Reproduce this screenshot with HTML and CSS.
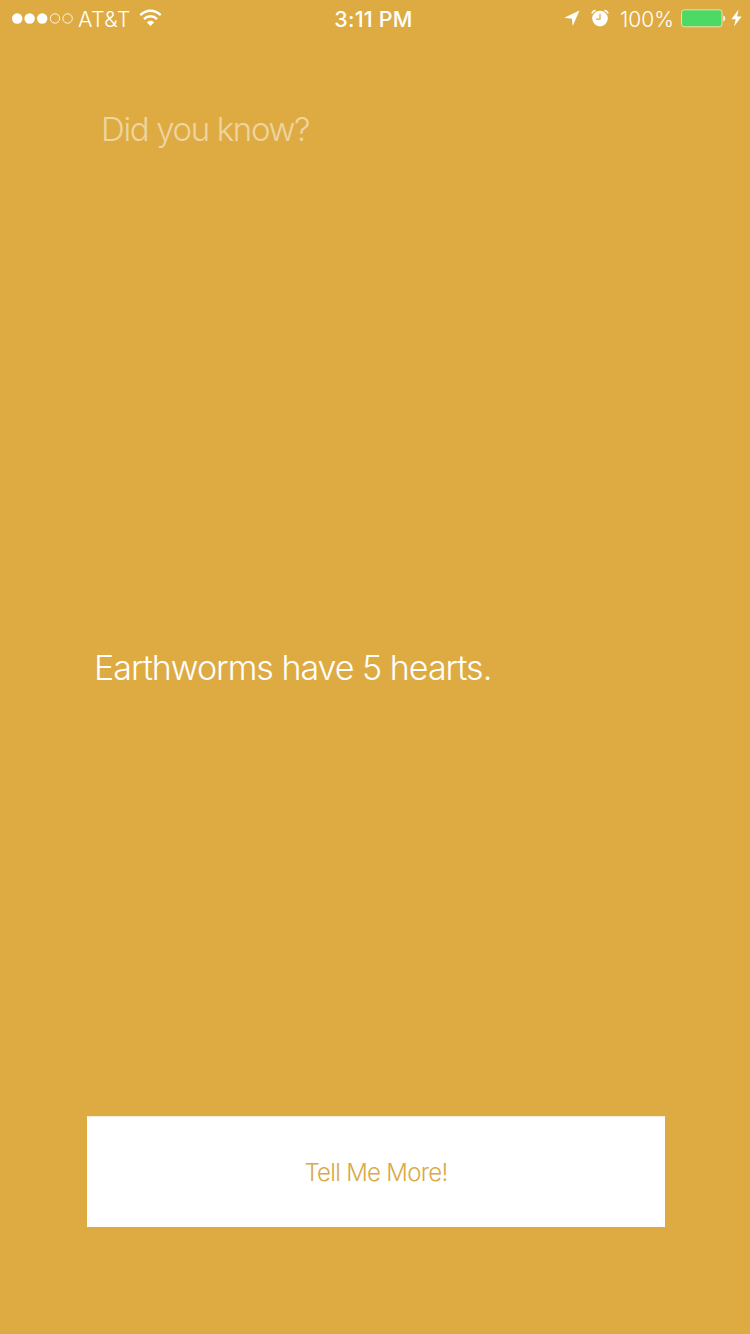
FILE: index.html
```html
<!DOCTYPE html>
<html lang="en">
<head>
<meta charset="utf-8">
<title>Did you know?</title>
<link rel="stylesheet" href="styles.css">
</head>
<body>
<div class="screen">
  <header class="status">
    <div class="status-left">
      <svg class="signal" width="62" height="12" viewBox="0 0 62 12">
        <g fill="#fff"><circle cx="5.2" cy="5.5" r="5.2"/><circle cx="17.6" cy="5.5" r="5.2"/><circle cx="30.2" cy="5.5" r="5.2"/></g>
        <g fill="none" stroke="#fff" stroke-opacity=".85"><circle cx="43" cy="5.5" r="4.7"/><circle cx="55.6" cy="5.5" r="4.7"/></g>
      </svg>
      <span class="carrier">AT&amp;T</span>
      <svg class="wifi" width="24" height="18" viewBox="0 0 24 18">
        <g fill="none" stroke="#fff" stroke-width="2.5"><path d="M1.3 6.2C7.4 .4 15.6 .4 21.7 6.2"/><path d="M5 10.1C8.7 6.4 14.3 6.4 18 10.1"/></g>
        <path fill="#fff" d="M7.7 13.2C9.9 11.1 13.1 11.1 15.3 13.2L11.5 17Z"/>
      </svg>
    </div>
    <span class="time">3:11 PM</span>
    <div class="status-right">
      <svg class="location" width="17" height="17" viewBox="0 0 17 17"><path fill="#fff" d="M16.5 .5L9.7 16L8.9 8.7L1.2 7.8Z"/></svg>
      <svg class="alarm" width="18" height="18" viewBox="0 0 18 18">
        <circle cx="9" cy="9.6" r="7.8" fill="#fff"/>
        <path d="M.9 4.4Q1.7 1.8 4.5 1.3M17.1 4.4Q16.3 1.8 13.5 1.3" fill="none" stroke="#fff" stroke-width="1.7"/>
        <path d="M9 4.7V10.1H5" fill="none" stroke="#deab42" stroke-width="1.3"/>
      </svg>
      <span class="percent">100%</span>
      <svg class="battery" width="45" height="19" viewBox="0 0 45 19">
        <rect x=".6" y=".8" width="40.4" height="17" rx="2.7" fill="#4cd964" stroke="#f3deac" stroke-width="1"/>
        <path fill="#fff" d="M42.3 6.5Q44.2 7.2 44.2 9.5T42.3 12.5Z"/>
      </svg>
      <svg class="bolt" width="11" height="18" viewBox="0 0 11 18"><path fill="#fff" d="M7.6 .4L.3 10.3H4.7L3 17.6L10.6 7.5H6.1Z"/></svg>
    </div>
  </header>
  <main class="content">
    <h1 class="title">Did you know?</h1>
    <p class="fact">Earthworms have 5 hearts.</p>
    <button class="more" type="button"><span class="more-label">Tell Me More!</span></button>
  </main>
</div>
</body>
</html>
```
FILE: styles.css
```css
* { box-sizing: border-box; }
body { margin: 0; }
svg { display: block; flex: none; }
.screen {
  display: flex;
  flex-direction: column;
  width: 750px;
  height: 1334px;
  background: #deab42;
  color: #fff;
  font-family: Inter, "Liberation Sans", sans-serif;
  font-weight: 300;
  white-space: nowrap;
}
.status {
  display: grid;
  grid-template-columns: 1fr auto 1fr;
  align-items: center;
  height: 38px;
  padding: 0 8px 0 12px;
  font-size: 21px;
}
.status-left, .status-right { display: flex; align-items: center; }
.status-right { justify-content: flex-end; }
.signal { margin-right: 4px; margin-top: -1px; }
.carrier { width: 52px; font-size: 21.5px; letter-spacing: 0.3px; }
.wifi { margin-left: 9px; margin-top: -2px; }
.time { padding-right: 7px; font-size: 21.5px; font-weight: 500; letter-spacing: 0.2px; }
.location { margin-right: 11px; margin-top: -1px; }
.alarm { margin-right: 11px; margin-top: -2px; }
.percent { width: 54px; margin-right: 7px; }
.battery { margin-right: 5px; margin-top: -2px; }
.bolt { margin-top: -2px; }
.content {
  flex: 1;
  display: flex;
  flex-direction: column;
  padding: 71px 85px 107px 87px;
}
.title {
  margin: 0 0 0 14px;
  font-size: 33px;
  font-weight: 300;
  line-height: 40px;
  letter-spacing: -1.35px;
  color: rgba(255, 255, 255, .5);
}
.fact {
  margin: 499px 0 0 7px;
  font-size: 34px;
  font-weight: 300;
  line-height: 40px;
  letter-spacing: -1px;
}
.more {
  width: 578px;
  height: 111px;
  margin-top: auto;
  padding: 2px 0 0;
  border: 0;
  border-top: 1px solid #f8edd6;
  background: #fff;
  color: #d9a945;
  font: 300 24px/30px Inter, "Liberation Sans", sans-serif;
  letter-spacing: -0.7px;
}
```
